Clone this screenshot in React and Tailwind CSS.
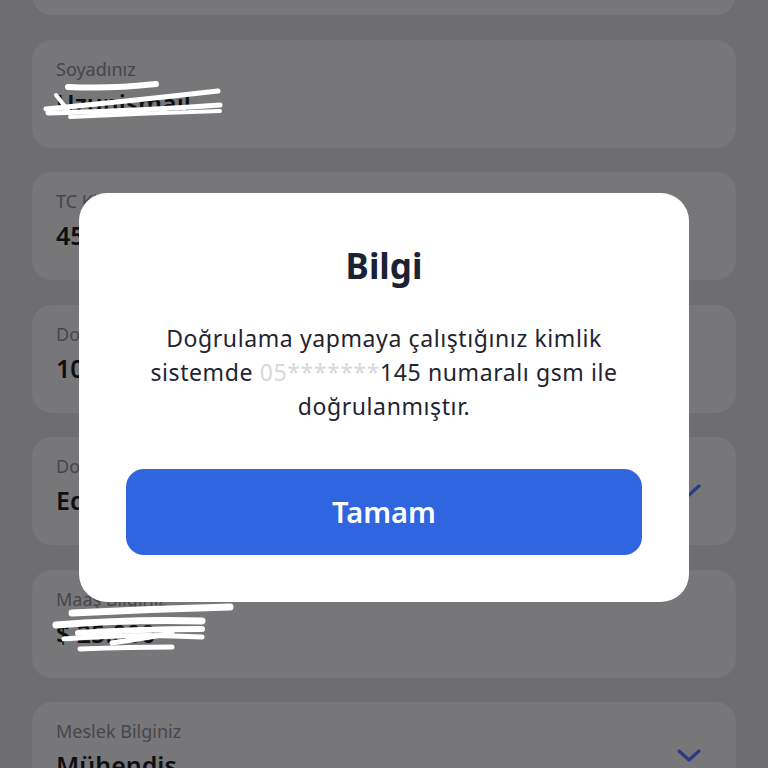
import React from "react";

const Chevron = () => (
  <svg width="26" height="16" viewBox="0 0 26 16" fill="none" className="shrink-0">
    <path d="M3 3 L13 12 L23 3" stroke="#2b3a86" strokeWidth="3.2" strokeLinecap="round" strokeLinejoin="round" />
  </svg>
);

const Scribble1 = () => (
  <svg className="absolute left-[-16px] top-[-6px]" width="200" height="44" viewBox="0 0 200 44" fill="none">
    <path d="M28 6 Q70 8 116 3" stroke="white" strokeWidth="6" strokeLinecap="round" />
    <path d="M6 28 Q90 20 178 10" stroke="white" strokeWidth="5" strokeLinecap="round" />
    <path d="M8 32 Q100 30 180 24" stroke="white" strokeWidth="5" strokeLinecap="round" />
    <path d="M30 36 Q110 32 180 30" stroke="white" strokeWidth="4" strokeLinecap="round" />
    <path d="M16 14 L30 32" stroke="white" strokeWidth="4" strokeLinecap="round" />
  </svg>
);

const Scribble2 = () => (
  <svg className="absolute left-[-4px] top-[-14px]" width="200" height="52" viewBox="0 0 200 52" fill="none">
    <path d="M20 10 Q100 6 178 4" stroke="white" strokeWidth="7" strokeLinecap="round" />
    <path d="M4 22 Q80 16 150 18" stroke="white" strokeWidth="7" strokeLinecap="round" />
    <path d="M26 30 Q90 26 150 26" stroke="white" strokeWidth="6" strokeLinecap="round" />
    <path d="M12 36 Q80 30 150 34" stroke="white" strokeWidth="5" strokeLinecap="round" />
    <path d="M60 40 Q100 34 120 30" stroke="white" strokeWidth="5" strokeLinecap="round" />
    <path d="M28 46 Q80 44 120 44" stroke="white" strokeWidth="5" strokeLinecap="round" />
  </svg>
);

function Card({ label, value, chevron, scribble }) {
  return (
    <div className="flex h-[108px] shrink-0 items-center justify-between rounded-[20px] bg-[#777779] pl-6 pr-[34px]">
      <div className="flex h-full flex-col pt-[17px]">
        <span className="text-[18px] leading-[24px] text-[#46464c]">{label}</span>
        <span className="relative mt-[6px] text-[25px] font-semibold leading-[32px] text-[#0f0f12]">
          {value}
          {scribble === 1 && <Scribble1 />}
          {scribble === 2 && <Scribble2 />}
        </span>
      </div>
      {chevron && <Chevron />}
    </div>
  );
}

export default function App() {
  return (
    <div
      className="relative h-[768px] w-[768px] overflow-hidden bg-[#6e6e72]"
      style={{ fontFamily: '"Noto Sans", "Open Sans", sans-serif' }}
    >
      <div className="-mt-[93px] flex flex-col gap-[24.5px] px-8">
        <Card label="Adınız" value="İsmail" />
        <Card label="Soyadınız" value="Uzunismail" scribble={1} />
        <Card label="TC Kimlik No" value="45612378910" />
        <Card label="Doğum Tarihi" value="10.05.1990" />
        <Card label="Doğum Yeri" value="Edirne" chevron />
        <Card label="Maaş Bilginiz" value="$ 25.000" scribble={2} />
        <Card label="Meslek Bilginiz" value="Mühendis" chevron />
      </div>

      <div className="absolute left-[79px] top-[193px] flex h-[409px] w-[610px] flex-col items-center rounded-[28px] bg-white px-[47px] pt-[51px]">
        <h2 className="text-[35px] font-bold leading-[44px] text-[#1a2233]">Bilgi</h2>
        <p className="mt-[33px] text-center text-[23px] leading-[34px] tracking-[0.6px] text-[#1f2430]">
          Doğrulama yapmaya çalıştığınız kimlik
          <br />
          sistemde <span className="text-[#d6d8dc]">05*******</span>145 numaralı gsm ile
          <br />
          doğrulanmıştır.
        </p>
        <button className="mt-[46px] flex h-[86px] w-full items-center justify-center rounded-[18px] bg-[#2f66e0] text-[29px] font-semibold text-white">
          Tamam
        </button>
      </div>
    </div>
  );
}
